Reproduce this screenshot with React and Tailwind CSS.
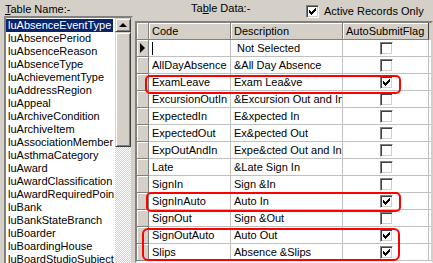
import React from 'react';

const tables = [
    'luAbsenceEventType', 'luAbsencePeriod', 'luAbsenceReason', 'luAbsenceType', 'luAchievementType',
    'luAddressRegion', 'luAppeal', 'luArchiveCondition', 'luArchiveItem', 'luAssociationMember',
    'luAsthmaCategory', 'luAward', 'luAwardClassification', 'luAwardRequiredPoin', 'luBank',
    'luBankStateBranch', 'luBoarder', 'luBoardingHouse', 'luBoardStudioSubject',
];

const rows = [
    { code: '', desc: ' Not Selected', flag: false, current: true },
    { code: 'AllDayAbsence', desc: '&All Day Absence', flag: false },
    { code: 'ExamLeave', desc: 'Exam Lea&ve', flag: true },
    { code: 'ExcursionOutIn', desc: '&Excursion Out and In', flag: false },
    { code: 'ExpectedIn', desc: 'E&xpected In', flag: false },
    { code: 'ExpectedOut', desc: 'Ex&pected Out', flag: false },
    { code: 'ExpOutAndIn', desc: 'Expe&cted Out and In', flag: false },
    { code: 'Late', desc: '&Late Sign In', flag: false },
    { code: 'SignIn', desc: 'Sign &In', flag: false },
    { code: 'SignInAuto', desc: 'Auto In', flag: true },
    { code: 'SignOut', desc: 'Sign &Out', flag: false },
    { code: 'SignOutAuto', desc: 'Auto Out', flag: true },
    { code: 'Slips', desc: 'Absence &Slips', flag: true },
];

function Check({ checked }) {
    return (
        <div className="w-[13px] h-[13px] bg-white border border-t-[#808080] border-l-[#808080] border-b-white border-r-white shadow-[inset_1px_1px_#404040,inset_-1px_-1px_#d4d0c8] flex items-center justify-center">
            {checked && (
                <svg width="7" height="7" viewBox="0 0 7 7" shapeRendering="crispEdges">
                    <path d="M0 2h1v3H0zM1 3h1v3H1zM2 4h1v3H2zM3 3h1v3H3zM4 2h1v3H4zM5 1h1v3H5zM6 0h1v3H6z" fill="#000" />
                </svg>
            )}
        </div>
    );
}

export default function App() {
    return (
        <div className="relative w-[433px] h-[263px] overflow-hidden bg-[#d4d0c8] text-[11px] leading-[13px] text-black font-['Liberation_Sans',Arial,sans-serif] flex">

            {/* Left: table list */}
            <div className="w-[135px] shrink-0 pl-[4px] flex flex-col">
                <div className="h-[21px] pl-[1px] pt-[3px]">
                    <span className="underline">T</span>able Name:-
                </div>
                <div className="w-[129px] flex-1 flex border-2 border-t-[#808080] border-l-[#808080] border-b-white border-r-[#d4d0c8] shadow-[inset_1px_1px_#404040]">
                    <div className="flex-1 bg-white pt-[1px] overflow-hidden">
                        {tables.map((t, i) => (
                            <div
                                key={t}
                                className={
                                    i === 0
                                        ? 'h-[13px] w-[107px] pl-[2px] bg-[#0a246a] text-white whitespace-nowrap overflow-hidden'
                                        : 'h-[13px] pl-[2px] whitespace-nowrap overflow-hidden'
                                }
                            >
                                {t}
                            </div>
                        ))}
                    </div>
                    {/* Vertical scrollbar */}
                    <div className="w-[16px] flex flex-col">
                        <div className="h-[14px] bg-[#d4d0c8] border border-t-[#d4d0c8] border-l-[#d4d0c8] border-b-[#404040] border-r-[#404040] shadow-[inset_1px_1px_white,inset_-1px_-1px_#808080] flex items-center justify-center">
                            <div className="w-0 h-0 border-l-[4px] border-r-[4px] border-b-[4px] border-l-transparent border-r-transparent border-b-black" />
                        </div>
                        <div className="h-[115px] bg-[#d4d0c8] border border-t-[#d4d0c8] border-l-[#d4d0c8] border-b-[#404040] border-r-[#404040] shadow-[inset_1px_1px_white,inset_-1px_-1px_#808080]" />
                        <div className="flex-1 bg-[repeating-conic-gradient(#d4d0c8_0_25%,#ffffff_0_50%)] bg-[length:2px_2px]" />
                    </div>
                </div>
            </div>

            {/* Right: table data grid */}
            <div className="flex-1 flex flex-col">
                <div className="h-[21px] flex items-start">
                    <div className="pl-[56px] pt-[2px] w-[171px]">
                        Ta<span className="underline">b</span>le Data:-
                    </div>
                    <div className="flex items-center gap-[5px] pt-[5px]">
                        <Check checked />
                        <span>Active Records Only</span>
                    </div>
                </div>
                <div className="flex-1 border-2 border-t-[#808080] border-l-[#808080] border-b-white border-r-[#d4d0c8] shadow-[inset_1px_1px_#404040] bg-white overflow-hidden">
                    {/* Header */}
                    <div className="flex h-[17px] bg-[#d4d0c8]">
                        <div className="w-[12px] shrink-0 border-r border-b border-r-[#808080] border-b-[#808080] shadow-[inset_1px_1px_white]" />
                        <div className="w-[82px] shrink-0 pl-[3px] pt-[2px] border-r border-b border-r-[#808080] border-b-[#808080] shadow-[inset_1px_1px_white]">Code</div>
                        <div className="w-[112px] shrink-0 pl-[3px] pt-[2px] border-r border-b border-r-[#808080] border-b-[#808080] shadow-[inset_1px_1px_white]">Description</div>
                        <div className="w-[86px] shrink-0 pl-[3px] pt-[2px] border-r border-b border-r-[#404040] border-b-[#808080] shadow-[inset_1px_1px_white]">AutoSubmitFlag</div>
                        <div className="flex-1" />
                    </div>
                    {rows.map((r, i) => (
                        <div key={i} className="flex h-[17px]">
                            <div className="w-[12px] shrink-0 bg-[#d4d0c8] border-r border-b border-r-[#808080] border-b-[#808080] shadow-[inset_1px_1px_white] flex items-center justify-center">
                                {r.current && (
                                    <div className="w-0 h-0 border-t-[5px] border-b-[5px] border-l-[5px] border-t-transparent border-b-transparent border-l-black" />
                                )}
                            </div>
                            <div className="w-[82px] shrink-0 pl-[3px] border-r border-b border-[#c0c0c0] flex items-center whitespace-nowrap overflow-hidden">
                                {r.current ? <div className="w-[1px] h-[13px] bg-black" /> : r.code}
                            </div>
                            <div className="w-[112px] shrink-0 pl-[3px] border-r border-b border-[#c0c0c0] flex items-center whitespace-pre overflow-hidden">
                                {r.desc}
                            </div>
                            <div className="w-[86px] shrink-0 border-r border-b border-[#c0c0c0] flex items-center justify-center pl-[2px]">
                                <Check checked={r.flag} />
                            </div>
                            <div className="flex-1 border-b border-[#c0c0c0]" />
                        </div>
                    ))}
                </div>
            </div>

            {/* Red annotation marks */}
            <div className="absolute left-[145px] top-[75px] w-[256px] h-[19px] border-2 border-[#f00] rounded-[5px]" />
            <div className="absolute left-[146px] top-[192px] w-[255px] h-[20px] border-2 border-[#f00] rounded-[5px]" />
            <div className="absolute left-[142px] top-[228px] w-[258px] h-[33px] border-2 border-[#f00] rounded-[6px]" />
        </div>
    );
}
